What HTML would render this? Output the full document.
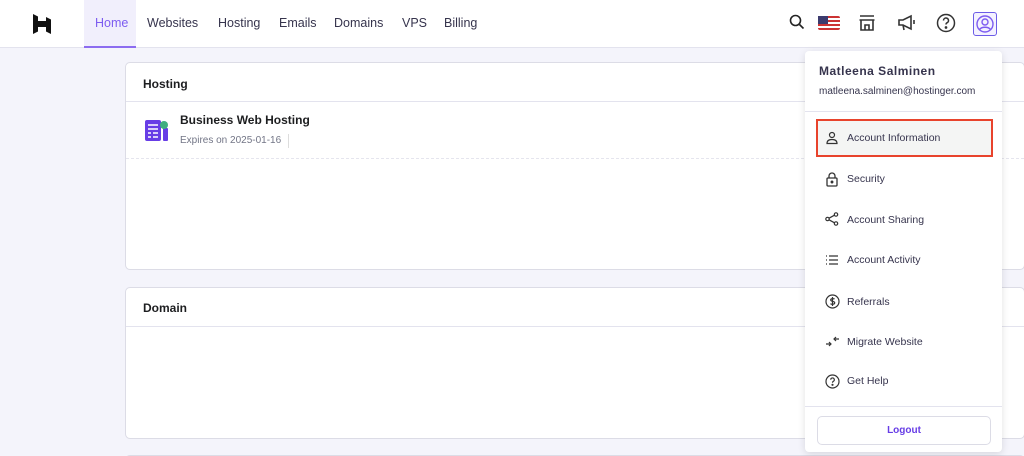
<!DOCTYPE html><html><head><style>
*{box-sizing:border-box;margin:0;padding:0}
html,body{width:1024px;height:456px;overflow:hidden}
body{background:#f4f4fb;font-family:"Liberation Sans",sans-serif;color:#2f1c6a;position:relative}
.hdr{position:absolute;left:0;top:0;width:1024px;height:48px;background:#fff;border-bottom:1px solid #e3e3ee}
.nav{position:absolute;top:0;height:48px;font-size:12.5px;color:#36344d;line-height:47px}
.card{position:absolute;left:125px;width:900px;background:#fff;border:1px solid #dcdce6;border-radius:5px}
.t{font-size:12px;font-weight:bold;color:#1d1e20}
.dd{position:absolute;left:805px;top:51px;width:197px;height:401px;background:#fff;border-radius:4px;box-shadow:0 2px 8px rgba(0,0,0,.12)}
.it{position:absolute;left:42px;font-size:10.5px;line-height:12px;color:#36344d}
.ic{position:absolute;left:20px}
</style></head><body>
<div class="hdr">
<svg style="position:absolute;left:32px;top:14px" width="20" height="20" viewBox="0 0 20 20"><path d="M1 0l5 2.5V7h8V3l5 2.5V20l-5-2.5V13H6v4.5L1 20z M6 8.5l8 .5V12H6z" fill="#111"/></svg>
<div style="position:absolute;left:84px;top:0;width:52px;height:48px;background:#f1effc;border-bottom:2px solid #8c6cf0"></div>
<div class="nav" style="left:95px;color:#7d5cf0">Home</div>
<div class="nav" style="left:147px">Websites</div>
<div class="nav" style="left:218px">Hosting</div>
<div class="nav" style="left:279px">Emails</div>
<div class="nav" style="left:334px">Domains</div>
<div class="nav" style="left:402px">VPS</div>
<div class="nav" style="left:444px">Billing</div>
<svg style="position:absolute;left:789px;top:14px" width="16" height="16" viewBox="0 0 16 16" fill="none" stroke="#222" stroke-width="1.6"><circle cx="6.5" cy="6.5" r="5"/><path d="M10.5 10.5l4 4"/></svg>
<svg style="position:absolute;left:818px;top:16px" width="22" height="14"><rect width="22" height="14" rx="2" fill="#c33"/><rect y="2" width="22" height="2" fill="#fff"/><rect y="6" width="22" height="2" fill="#fff"/><rect y="10" width="22" height="2" fill="#fff"/><rect width="10" height="8" fill="#3c3b6e"/></svg>
<svg style="position:absolute;left:858px;top:14px" width="18" height="18" viewBox="0 0 18 18" fill="none" stroke="#333" stroke-width="1.6"><path d="M2 2h14M1.5 6h15M3 6v10h12V6M7 16v-5h4v5"/></svg>
<svg style="position:absolute;left:897px;top:14px" width="20" height="18" viewBox="0 0 20 18" fill="none" stroke="#333" stroke-width="1.6"><path d="M2 6h4l8-4v13l-8-4H2z M6 11l1 5M17 6v4"/></svg>
<svg style="position:absolute;left:936px;top:13px" width="20" height="20" viewBox="0 0 20 20" fill="none" stroke="#333" stroke-width="1.5"><circle cx="10" cy="10" r="8.5"/><path d="M7.5 7.5a2.5 2.5 0 1 1 3.5 2.3c-.8.4-1 1-1 1.7"/><circle cx="10" cy="14.5" r=".6" fill="#333"/></svg>
<div style="position:absolute;left:973px;top:12px;width:24px;height:24px;border:1.5px solid #6c5ce7;border-radius:3px;background:#f4f2ff"></div>
<svg style="position:absolute;left:976px;top:15px" width="18" height="18" viewBox="0 0 18 18" fill="none" stroke="#7d5cf0" stroke-width="1.4"><circle cx="9" cy="9" r="8"/><circle cx="9" cy="7" r="3"/><path d="M3.5 14.5c2-3 9-3 11 0"/></svg>
</div>
<div class="card" style="top:62px;height:208px">
<div class="t" style="position:absolute;left:17px;top:14px">Hosting</div>
<div style="position:absolute;left:0;right:0;top:38px;border-top:1px solid #e3e3ee"></div>
<svg style="position:absolute;left:19px;top:55px" width="25" height="25" viewBox="0 0 25 25"><rect x="0" y="2" width="16" height="21" rx="2" fill="#673de6"/><rect x="18" y="10" width="5" height="13" rx="1" fill="#673de6"/><path d="M3 7h10M3 11h10M3 15h3M8 15h5M3 19h3M8 19h5" stroke="#fff" stroke-width="1.4"/><circle cx="19" cy="7" r="4" fill="#3fae80"/></svg>
<div style="position:absolute;left:54px;top:50px;font-size:12px;font-weight:bold;color:#1d1e20">Business Web Hosting</div>
<div style="position:absolute;left:54px;top:72px;font-size:10px;color:#727586">Expires on 2025-01-16</div>
<div style="position:absolute;left:162px;top:71px;height:14px;border-left:1px solid #ddd"></div>
<div style="position:absolute;left:0;right:0;top:95px;border-top:1px dashed #e5e5ee"></div>
</div>
<div class="card" style="top:287px;height:152px">
<div class="t" style="position:absolute;left:17px;top:13px">Domain</div>
<div style="position:absolute;left:0;right:0;top:38px;border-top:1px solid #e3e3ee"></div>
</div>
<div class="card" style="top:455px;height:20px"></div>
<div class="dd">
<div style="position:absolute;left:14px;top:13px;font-size:12px;font-weight:bold;color:#36344d;letter-spacing:.5px">Matleena Salminen</div>
<div style="position:absolute;left:14px;top:35px;font-size:10px;color:#36344d">matleena.salminen@hostinger.com</div>
<div style="position:absolute;left:0;right:0;top:60px;border-top:1px solid #e3e3ee"></div>
<div style="position:absolute;left:11px;top:68px;width:177px;height:38px;border:2px solid #e8432c;background:#f4f5f4"></div>
<svg class="ic" style="top:80px" width="14" height="14" viewBox="0 0 14 14" fill="none" stroke="#333" stroke-width="1.2"><circle cx="7" cy="4" r="2.5"/><path d="M2 12.5h10c0-3-2-4-5-4s-5 1-5 4z"/></svg>
<div class="it" style="top:81px">Account Information</div>
<svg class="ic" style="top:120px" width="14" height="16" viewBox="0 0 14 16" fill="none" stroke="#333" stroke-width="1.3"><rect x="2" y="7" width="10" height="8" rx="1"/><path d="M4 7V5a3 3 0 0 1 6 0v2"/><circle cx="7" cy="11" r=".8" fill="#333"/></svg>
<div class="it" style="top:122px">Security</div>
<svg class="ic" style="top:161px" width="14" height="14" viewBox="0 0 14 14" fill="none" stroke="#333" stroke-width="1.2"><circle cx="11" cy="2.5" r="1.7"/><circle cx="2.5" cy="7" r="1.7"/><circle cx="11" cy="11.5" r="1.7"/><path d="M4 6.2l5.5-3M4 7.8l5.5 3"/></svg>
<div class="it" style="top:163px">Account Sharing</div>
<svg class="ic" style="top:204px" width="14" height="10" viewBox="0 0 14 10" stroke="#333" stroke-width="1.2"><path d="M1 1h1M4 1h9M1 5h1M4 5h9M1 9h1M4 9h9"/></svg>
<div class="it" style="top:203px">Account Activity</div>
<svg class="ic" style="top:243px" width="15" height="15" viewBox="0 0 15 15" fill="none" stroke="#333" stroke-width="1.2"><circle cx="7.5" cy="7.5" r="6.5"/><path d="M9.5 5.2c-.5-.8-3.8-1-3.8.8s4 .9 4 2.8-3.4 1.8-4.2.8M7.5 3v9"/></svg>
<div class="it" style="top:245px">Referrals</div>
<svg class="ic" style="top:284px" width="15" height="13" viewBox="0 0 15 13" fill="none" stroke="#333" stroke-width="1.2"><path d="M1 9h5M4 7l2 2-2 2M14 4H9M11 2L9 4l2 2"/></svg>
<div class="it" style="top:285px">Migrate Website</div>
<svg class="ic" style="top:323px" width="15" height="15" viewBox="0 0 15 15" fill="none" stroke="#333" stroke-width="1.2"><circle cx="7.5" cy="7.5" r="6.5"/><path d="M5.7 5.7a1.8 1.8 0 1 1 2.5 1.7c-.5.3-.7.7-.7 1.3"/><circle cx="7.5" cy="10.8" r=".5" fill="#333"/></svg>
<div class="it" style="top:324px">Get Help</div>
<div style="position:absolute;left:0;right:0;top:355px;border-top:1px solid #e3e3ee"></div>
<div style="position:absolute;left:12px;top:365px;width:174px;height:29px;border:1px solid #dcdce6;border-radius:5px;text-align:center;line-height:27px;font-size:10px;font-weight:bold;color:#673de6">Logout</div>
</div>
</body></html>
